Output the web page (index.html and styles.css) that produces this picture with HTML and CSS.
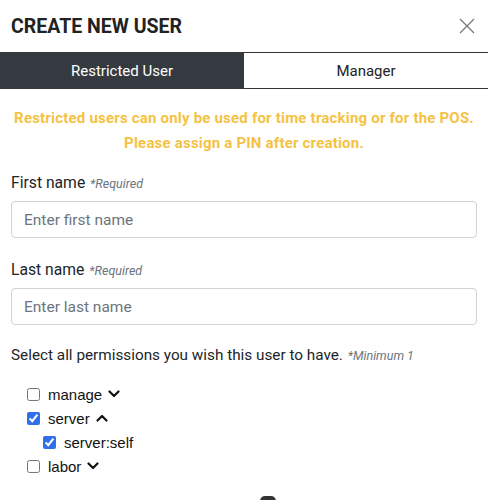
FILE: index.html
```html
<!DOCTYPE html>
<html>
<head>
<meta charset="utf-8">
<link rel="stylesheet" href="styles.css">
</head>
<body>
<div class="modal">
  <div class="header">
    <h1 class="title">CREATE NEW USER</h1>
    <button class="close" aria-label="Close">
      <svg width="16" height="16" viewBox="0 0 16 16"><path d="M1 1 L15 15 M15 1 L1 15" stroke="#777" stroke-width="1.3" fill="none"/></svg>
    </button>
  </div>
  <div class="tabs">
    <div class="tab active">Restricted User</div>
    <div class="tab">Manager</div>
  </div>
  <div class="body">
    <p class="warning">Restricted users can only be used for time tracking or for the POS.<br>Please assign a PIN after creation.</p>
    <div class="field">
      <label class="label">First name <em class="req">*Required</em></label>
      <input class="input" type="text" placeholder="Enter first name">
    </div>
    <div class="field">
      <label class="label">Last name <em class="req">*Required</em></label>
      <input class="input" type="text" placeholder="Enter last name">
    </div>
    <p class="perm-title">Select all permissions you wish this user to have. <em class="req">*Minimum 1</em></p>
    <ul class="perms">
      <li class="perm"><input type="checkbox"><span>manage</span>
        <svg class="chev" width="12" height="8" viewBox="0 0 12 8"><path d="M1.5 1.5 L6 6 L10.5 1.5" stroke="#111" stroke-width="2.2" fill="none" stroke-linecap="round" stroke-linejoin="round"/></svg></li>
      <li class="perm"><input type="checkbox" checked><span>server</span>
        <svg class="chev" width="12" height="8" viewBox="0 0 12 8"><path d="M1.5 6.5 L6 2 L10.5 6.5" stroke="#111" stroke-width="2.2" fill="none" stroke-linecap="round" stroke-linejoin="round"/></svg></li>
      <li class="perm sub"><input type="checkbox" checked><span>server:self</span></li>
      <li class="perm"><input type="checkbox"><span>labor</span>
        <svg class="chev" width="12" height="8" viewBox="0 0 12 8"><path d="M1.5 1.5 L6 6 L10.5 1.5" stroke="#111" stroke-width="2.2" fill="none" stroke-linecap="round" stroke-linejoin="round"/></svg></li>
    </ul>
    <div class="footer-peek"></div>
  </div>
</div>
</body>
</html>
```
FILE: styles.css
```css
* { box-sizing: border-box; }
html, body { margin: 0; padding: 0; background: #fff; }
body {
  font-family: Roboto, "Liberation Sans", sans-serif;
  color: #212529;
  width: 488px;
  height: 500px;
  overflow: hidden;
}
.header {
  height: 52px;
  display: flex;
  align-items: center;
  justify-content: space-between;
  padding: 0 13px 0 11px;
}
.title {
  margin: 0;
  font-size: 19.5px;
  font-weight: 700;
  color: #222;
  letter-spacing: 0;
}
.close {
  border: 0;
  background: none;
  padding: 0;
  width: 16px;
  height: 16px;
  display: flex;
}
.tabs {
  display: flex;
  height: 37px;
}
.tab {
  flex: 1;
  display: flex;
  align-items: center;
  justify-content: center;
  font-size: 15px;
  color: #222;
  border-top: 1px solid #333;
  border-bottom: 1px solid #333;
  background: #fff;
}
.tab.active {
  background: #343a40;
  border-color: #343a40;
  color: #fff;
}
.body {
  padding: 0 11px;
}
.warning {
  margin: 17px 0 0;
  text-align: center;
  font-weight: 700;
  font-size: 15px;
  line-height: 25px;
  color: #f5c244;
  letter-spacing: 0.2px;
  white-space: nowrap;
}
.field {
  margin-top: 17px;
  display: flex;
  flex-direction: column;
}
.field + .field { margin-top: 22px; }
.label {
  font-size: 15.7px;
  line-height: 20px;
  color: #212529;
  margin-bottom: 7px;
}
.req {
  font-size: 12.5px;
  color: #6c757d;
  font-style: italic;
  margin-left: 1px;
}
.input {
  height: 37px;
  width: 100%;
  border: 1px solid #ced4da;
  border-radius: 4px;
  padding: 0 12px;
  font-family: inherit;
  font-size: 15.5px;
  color: #212529;
  outline: none;
}
.input::placeholder { color: #6c757d; }
.perm-title {
  margin: 20px 0 0;
  font-size: 15.3px;
  line-height: 20px;
}
.perms {
  list-style: none;
  margin: 16px 0 0;
  padding: 0 0 0 16px;
  font-family: "Liberation Sans", Arial, sans-serif;
  font-size: 15px;
  color: #111;
}
.perm {
  display: flex;
  align-items: center;
  height: 24px;
}
.perm input {
  width: 13px;
  height: 13px;
  margin: 0 8px 0 0;
  accent-color: #2f6fea;
}
.perm.sub { padding-left: 16px; }
.chev { margin-left: 6px; }
.footer-peek {
  margin: 18px 0 0 249px;
  width: 16px;
  height: 16px;
  border-radius: 5px;
  background: #333;
}
```
